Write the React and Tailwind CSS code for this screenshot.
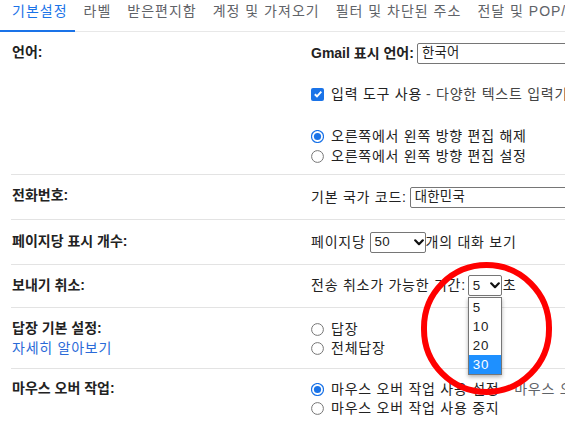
import React from 'react';

const tabs = ['기본설정', '라벨', '받은편지함', '계정 및 가져오기', '필터 및 차단된 주소', '전달 및 POP/IMAP', '부가기능'];

const Chevron = () => (
  <svg width="10" height="7" viewBox="0 0 10 7" className="shrink-0">
    <path d="M1.2 1.3 L5 5.2 L8.8 1.3" fill="none" stroke="#111" strokeWidth="2.2" strokeLinecap="round" strokeLinejoin="round" />
  </svg>
);

const Radio = ({ checked }) => (
  <svg width="13" height="13" viewBox="0 0 13 13" className="shrink-0">
    {checked ? (
      <>
        <circle cx="6.5" cy="6.5" r="6" fill="#fff" stroke="#1a73e8" strokeWidth="1.2" />
        <circle cx="6.5" cy="6.5" r="3.6" fill="#1a73e8" />
      </>
    ) : (
      <circle cx="6.5" cy="6.5" r="5.9" fill="#fff" stroke="#767676" strokeWidth="1" />
    )}
  </svg>
);

const RadioLine = ({ checked, children, className = '' }) => (
  <div className={`flex items-center h-[19px] whitespace-nowrap ${className}`}>
    <Radio checked={checked} />
    <span className="ml-[7px]">{children}</span>
  </div>
);

// looks like a closed native select
const FakeSelect = ({ value, className = '', arrow = true }) => (
  <div className={`flex items-center h-[21px] border border-[#767676] rounded-[2px] bg-white pl-[4px] pr-[1px] text-[13.33px] tracking-[0.3px] ${className}`}>
    <span className="flex-1 whitespace-nowrap">{value}</span>
    {arrow && <Chevron />}
  </div>
);

const Row = ({ label, left, children, leftPad, rightPad, last }) => (
  <div className={`grid grid-cols-[300px_1fr] ${last ? '' : 'border-b border-[#e3e3e3]'}`}>
    <div className={`pl-[1px] leading-[20px] ${leftPad}`}>
      <div className="font-bold tracking-normal">{label}</div>
      {left}
    </div>
    <div className={rightPad}>{children}</div>
  </div>
);

export default function App() {
  return (
    <div className="relative w-[565px] h-[423px] overflow-hidden bg-white text-[14px] tracking-[0.75px] text-[#222] font-['Liberation_Sans','Noto_Sans_CJK_KR',sans-serif]">
      {/* tabs */}
      <div className="flex h-[30px] pl-[12px] gap-[16px] whitespace-nowrap leading-[22px] tracking-[1px]">
        {tabs.map((t, i) => (
          <span key={t} className={i === 0 ? 'text-[#1a73e8]' : 'text-[#5f6368]'}>{t}</span>
        ))}
      </div>
      <div className="flex h-[2px]">
        <div className="w-[75px] h-[2px] bg-[#1a73e8]" />
        <div className="flex-1 mt-[1px] h-[1px] bg-[#e8e8e8]" />
      </div>

      <div className="ml-[11px]">
        <Row label="언어:" leftPad="pt-[10px]" rightPad="pt-[11px] pb-[8px]">
          <div className="flex items-center h-[20px] whitespace-nowrap">
            <span className="font-bold tracking-normal mr-[3px]">Gmail 표시 언어:</span>
            <FakeSelect value="한국어" arrow={false} className="w-[260px]" />
          </div>
          <div className="flex items-center h-[20px] mt-[21px] whitespace-nowrap">
            <span className="w-[13px] h-[13px] rounded-[2px] bg-[#1a73e8] flex items-center justify-center shrink-0">
              <svg width="10" height="10" viewBox="0 0 10 10">
                <path d="M1.8 5.2 L4 7.3 L8.3 2.6" fill="none" stroke="#fff" strokeWidth="1.9" />
              </svg>
            </span>
            <span className="ml-[7px]">입력 도구 사용</span>
            <span className="ml-[4px] text-[#444]">- 다양한 텍스트 입력기를 사용하여 원하는 언어로 입력합니다</span>
          </div>
          <RadioLine checked className="mt-[22px] h-[20px]">오른쪽에서 왼쪽 방향 편집 해제</RadioLine>
          <RadioLine className="h-[20px]">오른쪽에서 왼쪽 방향 편집 설정</RadioLine>
        </Row>

        <Row label="전화번호:" leftPad="pt-[10px]" rightPad="pt-[12px] pb-[12px]">
          <div className="flex items-center h-[20px] whitespace-nowrap">
            <span className="mr-[3px]">기본 국가 코드:</span>
            <FakeSelect value="대한민국" arrow={false} className="w-[260px] h-[20px]" />
          </div>
        </Row>

        <Row label="페이지당 표시 개수:" leftPad="pt-[11px]" rightPad="pt-[12px] pb-[12px]">
          <div className="flex items-center h-[20px] whitespace-nowrap">
            <span className="mr-[4px]">페이지당</span>
            <FakeSelect value="50" className="w-[56px] h-[20px]" />
            <span>개의 대화 보기</span>
          </div>
        </Row>

        <Row label="보내기 취소:" leftPad="pt-[10px]" rightPad="pt-[10px] pb-[11px]">
          <div className="flex items-center h-[21px] whitespace-nowrap">
            <span className="mr-[2px]">전송 취소가 가능한 기간:</span>
            <div className="relative">
              <FakeSelect value="5" className="w-[34px]" />
              {/* open option list */}
              <div className="absolute z-10 left-0 top-[22px] w-[34px] bg-white border border-[#767676] shadow-[0_2px_4px_rgba(0,0,0,0.3)] text-[13.33px] leading-[19px]">
                {['5', '10', '20', '30'].map((o) => (
                  <div key={o} className={`pl-[4px] h-[19px] ${o === '30' ? 'bg-[#1e90ff] text-white' : ''}`}>{o}</div>
                ))}
              </div>
            </div>
            <span className="ml-[1px]">초</span>
          </div>
        </Row>

        <Row
          label="답장 기본 설정:"
          left={<a className="block text-[#2a6ad8]">자세히 알아보기</a>}
          leftPad="pt-[10px] pb-[10px]"
          rightPad="pt-[12px] pb-[10px]"
        >
          <RadioLine>답장</RadioLine>
          <RadioLine>전체답장</RadioLine>
        </Row>

        <Row label="마우스 오버 작업:" leftPad="pt-[9px]" rightPad="pt-[11px]" last>
          <RadioLine checked>
            마우스 오버 작업 사용 설정<span className="text-[#5f6368]"> - 마우스 오버 시 보관처리, 삭제, 읽음으로 표시</span>
          </RadioLine>
          <RadioLine>마우스 오버 작업 사용 중지</RadioLine>
        </Row>
      </div>

      {/* red annotation circle */}
      <div className="absolute z-20 left-[421px] top-[262px] w-[131px] h-[133px] rounded-full border-[6px] border-[#ff0000] pointer-events-none" />
    </div>
  );
}
